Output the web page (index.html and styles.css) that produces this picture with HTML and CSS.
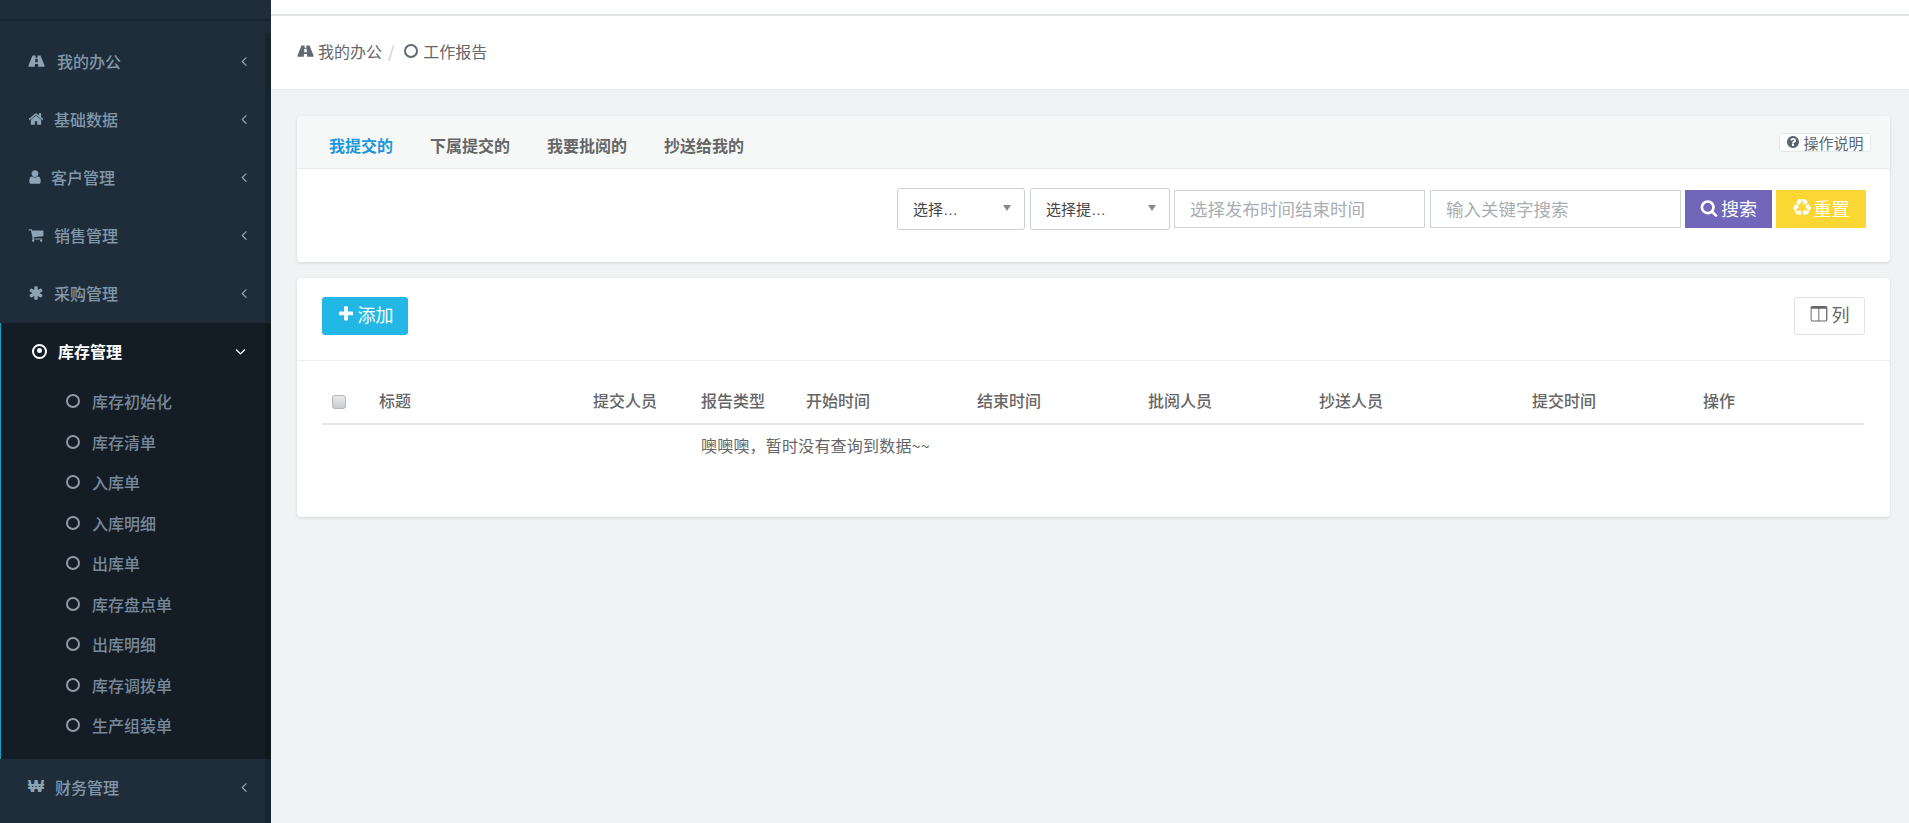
FILE: index.html
```html
<!DOCTYPE html>
<html lang="zh-CN">
  <head>
    <meta charset="utf-8" />
    <title>工作报告</title>
    <link rel="stylesheet" href="styles.css">
  </head>

  <body>
    <!-- 图标 -->
    <svg class="icon-defs" xmlns="http://www.w3.org/2000/svg">
      <symbol id="i-road" viewBox="0 0 1920 1792"><path d="M1111 1006v-4l-24-320q-1-13-11-22.500t-23-9.500h-186q-13 0-23 9.500t-11 22.500l-24 320v4q-1 12 8 20t21 8h244q12 0 21-8t8-20zm759 467q0 73-46 73h-704q13 0 22-9.500t8-22.500l-20-256q-1-13-11-22.500t-23-9.500h-272q-13 0-23 9.500t-11 22.500l-20 256q-1 13 8 22.500t22 9.500h-704q-46 0-46-73 0-54 26-116l417-1044q8-19 26-33t38-14h339q-13 0-23 9.500t-11 22.500l-15 192q-1 14 8 23t22 9h166q13 0 22-9t8-23l-15-192q-1-13-11-22.500t-23-9.500h339q20 0 38 14t26 33l417 1044q26 62 26 116z"/></symbol>
      <symbol id="i-home" viewBox="0 0 1792 1792"><path d="M1472 992v480q0 26-19 45t-45 19h-384v-384h-256v384h-384q-26 0-45-19t-19-45v-480q0-1 .5-3t.5-3l575-474 575 474q1 2 1 6zm223-69l-62 74q-8 9-21 11h-3q-13 0-21-7l-692-577-692 577q-12 8-24 7-13-2-21-11l-62-74q-8-10-7-23.500t11-21.500l719-599q32-26 76-26t76 26l244 204v-195q0-14 9-23t23-9h192q14 0 23 9t9 23v408l219 182q10 8 11 21.500t-7 23.500z"/></symbol>
      <symbol id="i-user" viewBox="0 0 1792 1792"><path d="M1536 1399q0 109-62.500 187t-150.500 78h-854q-88 0-150.500-78t-62.500-187q0-85 8.500-160.500t31.500-152 58.500-131 94-89 134.500-34.500q131 128 313 128t313-128q76 0 134.500 34.500t94 89 58.500 131 31.500 152 8.500 160.500zm-256-887q0 159-112.500 271.500t-271.500 112.500-271.500-112.500-112.500-271.500 112.500-271.500 271.500-112.500 271.500 112.500 112.500 271.500z"/></symbol>
      <symbol id="i-cart" viewBox="0 0 1792 1792"><path d="M704 1536q0 52-38 90t-90 38-90-38-38-90 38-90 90-38 90 38 38 90zm896 0q0 52-38 90t-90 38-90-38-38-90 38-90 90-38 90 38 38 90zm128-1088v512q0 24-16.500 42.500t-40.500 21.500l-1044 122q13 60 13 70 0 16-24 64h920q26 0 45 19t19 45-19 45-45 19h-1024q-26 0-45-19t-19-45q0-11 8-31.500t16-36 21.500-40 15.500-29.500l-177-823h-204q-26 0-45-19t-19-45 19-45 45-19h256q16 0 28.500 6.500t19.500 15.500 13 24.500 8 26 5.500 29.500 4.500 26h1201q26 0 45 19t19 45z"/></symbol>
      <symbol id="i-asterisk" viewBox="0 0 1792 1792"><path d="M1546 1050q46 26 59.500 77.500t-12.500 97.500l-64 110q-26 46-77.500 59.500t-97.500-12.500l-266-153v307q0 52-38 90t-90 38h-128q-52 0-90-38t-38-90v-307l-266 153q-46 26-97.500 12.500t-77.500-59.500l-64-110q-26-46-12.500-97.500t59.500-77.500l266-154-266-154q-46-26-59.500-77.500t12.500-97.500l64-110q26-46 77.500-59.500t97.500 12.500l266 153v-307q0-52 38-90t90-38h128q52 0 90 38t38 90v307l266-153q46-26 97.500-12.500t77.500 59.500l64 110q26 46 12.500 97.500t-59.500 77.500l-266 154z"/></symbol>
      <symbol id="i-left" viewBox="0 0 1792 1792"><path d="M1203 544q0 13-10 23l-393 393 393 393q10 10 10 23t-10 23l-50 50q-10 10-23 10t-23-10l-466-466q-10-10-10-23t10-23l466-466q10-10 23-10t23 10l50 50q10 10 10 23z"/></symbol>
      <symbol id="i-down" viewBox="0 0 1792 1792"><path d="M1395 736q0 13-10 23l-466 466q-10 10-23 10t-23-10l-466-466q-10-10-10-23t10-23l50-50q10-10 23-10t23 10l393 393 393-393q10-10 23-10t23 10l50 50q10 10 10 23z"/></symbol>
      <symbol id="i-help" viewBox="0 0 1792 1792"><path d="M1024 1376v-192q0-14-9-23t-23-9h-192q-14 0-23 9t-9 23v192q0 14 9 23t23 9h192q14 0 23-9t9-23zm256-672q0-88-55.500-163t-138.500-116-170-41q-243 0-371 213-15 24 8 42l132 100q7 6 19 6 16 0 25-12 53-68 86-92 34-24 86-24 48 0 85.500 26t37.500 59q0 38-20 61t-68 45q-63 28-115.500 86.500t-52.500 125.500v36q0 14 9 23t23 9h192q14 0 23-9t9-23q0-19 21.500-49.500t54.500-49.500q32-18 49-28.500t46-35 44.500-48 28-60.500 12.500-81zm384 192q0 209-103 385.500t-279.500 279.500-385.500 103-385.500-103-279.500-279.500-103-385.500 103-385.500 279.500-279.500 385.500-103 385.500 103 279.500 279.500 103 385.500z"/></symbol>
      <symbol id="i-search" viewBox="0 0 1792 1792"><path d="M1216 832q0-185-131.500-316.500t-316.500-131.500-316.500 131.500-131.500 316.500 131.500 316.500 316.500 131.500 316.500-131.500 131.500-316.500zm512 832q0 52-38 90t-90 38q-54 0-90-38l-343-342q-179 124-399 124-143 0-273.500-55.500t-225-150-150-225-55.500-273.500 55.500-273.500 150-225 225-150 273.500-55.500 273.500 55.500 225 150 150 225 55.500 273.500q0 220-124 399l343 343q37 37 37 90z"/></symbol>
      <symbol id="i-recycle" viewBox="0 0 1792 1792"><path d="M836 1169l-15 368-2 22-420-29q-36-3-67-31.500t-47-65.500q-11-27-14.500-55t4-65 12-55 21.500-64 19-53q78 12 509 28zm-387-586l180 379-147-92q-63 72-111.500 144.500t-72.500 125-39.500 94.500-18.500 63l-4 21-190-357q-17-26-18-56t6-47l8-18q35-63 114-188l-140-86zm1231 517l-188 359q-12 29-36.500 46.500t-43.500 20.500l-18 4q-71 7-219 12l8 164-230-367 211-362 7 173q170 16 283 5t170-33zm-785-924q-47 63-265 435l-317-187-19-12 225-356q20-31 60-45t80-10q24 2 48.500 12t42 21 41.500 33 36 34.500 36 39.500 32 35zm655 307l212 363q18 37 12.500 76t-27.500 74q-13 20-33 37t-38 28-48.500 22-47 16-51.500 14-46 12q-34-72-265-436l313-195zm-143-226l142-83-220 373-419-20 151-86q-34-89-75-166t-75.500-123.500-64.500-80-47-46.500l-17-13 405 1q31-3 58 10.500t39 28.500l11 15q39 61 112 190z"/></symbol>
      <symbol id="i-plus" viewBox="0 0 1792 1792"><path d="M1600 736v192q0 40-28 68t-68 28h-416v416q0 40-28 68t-68 28h-192q-40 0-68-28t-28-68v-416h-416q-40 0-68-28t-28-68v-192q0-40 28-68t68-28h416v-416q0-40 28-68t68-28h192q40 0 68 28t28 68v416h416q40 0 68 28t28 68z"/></symbol>
      <symbol id="i-columns" viewBox="0 0 1792 1792"><path d="M224 1536h608v-1152h-672v1088q0 26 19 45t45 19zm1376-64v-1088h-672v1152h608q26 0 45-19t19-45zm128-1216v1216q0 66-47 113t-113 47h-1344q-66 0-113-47t-47-113v-1216q0-66 47-113t113-47h1344q66 0 113 47t47 113z"/></symbol>
    </svg>

    <!-- 左侧菜单 -->
    <aside class="sidebar">
      <div class="sidebar-top"></div>
      <nav class="menu">
        <a class="menu-item">
          <svg class="menu-icon icon-road"><use href="#i-road"/></svg>
          <span class="menu-label">我的办公</span>
          <svg class="menu-arrow"><use href="#i-left"/></svg>
        </a>
        <a class="menu-item">
          <svg class="menu-icon"><use href="#i-home"/></svg>
          <span class="menu-label">基础数据</span>
          <svg class="menu-arrow"><use href="#i-left"/></svg>
        </a>
        <a class="menu-item">
          <svg class="menu-icon icon-user"><use href="#i-user"/></svg>
          <span class="menu-label">客户管理</span>
          <svg class="menu-arrow"><use href="#i-left"/></svg>
        </a>
        <a class="menu-item">
          <svg class="menu-icon"><use href="#i-cart"/></svg>
          <span class="menu-label">销售管理</span>
          <svg class="menu-arrow"><use href="#i-left"/></svg>
        </a>
        <a class="menu-item">
          <svg class="menu-icon"><use href="#i-asterisk"/></svg>
          <span class="menu-label">采购管理</span>
          <svg class="menu-arrow"><use href="#i-left"/></svg>
        </a>

        <!-- 当前展开的分组 -->
        <div class="menu-group">
          <a class="menu-item menu-item-open">
            <span class="dot-ring"></span>
            <span class="menu-label">库存管理</span>
            <svg class="menu-arrow arrow-down"><use href="#i-down"/></svg>
          </a>
          <ul class="submenu">
            <li><span class="ring"></span>库存初始化</li>
            <li><span class="ring"></span>库存清单</li>
            <li><span class="ring"></span>入库单</li>
            <li><span class="ring"></span>入库明细</li>
            <li><span class="ring"></span>出库单</li>
            <li><span class="ring"></span>库存盘点单</li>
            <li><span class="ring"></span>出库明细</li>
            <li><span class="ring"></span>库存调拨单</li>
            <li><span class="ring"></span>生产组装单</li>
          </ul>
        </div>

        <a class="menu-item">
          <span class="menu-glyph">₩</span>
          <span class="menu-label">财务管理</span>
          <svg class="menu-arrow"><use href="#i-left"/></svg>
        </a>
      </nav>
      <div class="sidebar-track"></div>
    </aside>

    <main class="main">
      <div class="topbar"></div>

      <!-- 面包屑 -->
      <div class="crumbs">
        <svg class="crumb-road"><use href="#i-road"/></svg>
        <span>我的办公</span>
        <span class="crumb-sep">/</span>
        <span class="crumb-ring"></span>
        <span>工作报告</span>
      </div>

      <div class="content">
        <!-- 筛选 -->
        <section class="card">
          <div class="card-head">
            <div class="tabs">
              <a class="tab tab-active">我提交的</a>
              <a class="tab">下属提交的</a>
              <a class="tab">我要批阅的</a>
              <a class="tab">抄送给我的</a>
            </div>
            <button class="btn-help">
              <svg><use href="#i-help"/></svg>操作说明
            </button>
          </div>
          <div class="filters">
            <div class="select select-type"><span>选择…</span><i class="caret"></i></div>
            <div class="select select-user"><span>选择提…</span><i class="caret"></i></div>
            <input class="field field-time" placeholder="选择发布时间结束时间" />
            <input class="field" placeholder="输入关键字搜索" />
            <button class="btn btn-search"><svg><use href="#i-search"/></svg>搜索</button>
            <button class="btn btn-reset"><svg><use href="#i-recycle"/></svg>重置</button>
          </div>
        </section>

        <!-- 列表 -->
        <section class="card card-list">
          <div class="toolbar">
            <button class="btn btn-add"><svg><use href="#i-plus"/></svg>添加</button>
            <button class="btn-columns"><svg><use href="#i-columns"/></svg>列</button>
          </div>
          <div class="table-wrap">
            <table class="report-table">
              <colgroup>
                <col class="c-check" /><col class="c-title" /><col class="c-user" />
                <col class="c-type" /><col class="c-time2" /><col class="c-time2" />
                <col class="c-time2" /><col class="c-cc" /><col class="c-time2" /><col />
              </colgroup>
              <thead>
                <tr>
                  <th><input type="checkbox" class="check" /></th>
                  <th>标题</th>
                  <th>提交人员</th>
                  <th>报告类型</th>
                  <th>开始时间</th>
                  <th>结束时间</th>
                  <th>批阅人员</th>
                  <th>抄送人员</th>
                  <th>提交时间</th>
                  <th>操作</th>
                </tr>
              </thead>
              <tbody>
                <tr>
                  <td colspan="3"></td>
                  <td colspan="7">噢噢噢，暂时没有查询到数据~~</td>
                </tr>
              </tbody>
            </table>
          </div>
        </section>
      </div>
    </main>
  </body>
</html>
```

FILE: styles.css
```css
* {
  box-sizing: border-box;
}

body {
  margin: 0;
  height: 100vh;
  display: flex;
  overflow: hidden;
  background: #f0f3f4;
  color: #666;
  font-family: "Noto Sans CJK SC", "Liberation Sans", sans-serif;
  font-size: 16px;
}

button,
input {
  font-family: inherit;
}

.icon-defs {
  display: none;
}

svg {
  fill: currentColor;
  flex: none;
}

/* 左侧菜单 */
.sidebar {
  position: relative;
  width: 271px;
  flex: none;
  background: #1f2d3a;
  color: #8197aa;
}

.sidebar-top {
  height: 21px;
  border-bottom: 2px solid #17222c;
}

.menu {
  padding-top: 12px;
}

.menu-item {
  display: flex;
  align-items: center;
  height: 58px;
  padding: 0 19px 2px 28px;
  font-weight: 500;
}

.menu-icon {
  width: 16px;
  height: 16px;
  margin-right: 10px;
  color: #8ea3b6;
}

.icon-road {
  width: 17px;
  margin-right: 12px;
}

.icon-user {
  margin-right: 8px;
  margin-left: -1px;
  width: 16px;
}

.menu-glyph {
  width: 18px;
  margin-right: 9px;
  font-weight: 700;
  font-family: "Liberation Sans", sans-serif;
  font-size: 17px;
  color: #8ea3b6;
}

.menu-label {
  flex: 1;
}

.menu-arrow {
  width: 16px;
  height: 16px;
  color: #8ea3b6;
}

.menu-group {
  background: #141d25;
  border-left: 1px solid #12a0bd;
  padding-bottom: 13px;
}

.menu-item-open {
  color: #fff;
  padding-left: 31px;
  padding-right: 22px;
  font-weight: 700;
}

.arrow-down {
  width: 17px;
  height: 17px;
  color: #fff;
}

.dot-ring {
  position: relative;
  width: 15px;
  height: 15px;
  margin-right: 11px;
  border: 2.5px solid #fff;
  border-radius: 50%;
}

.dot-ring::after {
  content: "";
  position: absolute;
  top: 2.5px;
  left: 2.5px;
  width: 5px;
  height: 5px;
  background: #fff;
  border-radius: 50%;
}

.submenu {
  list-style: none;
  margin: 0;
  padding: 0 0 0 65px;
  color: #76889a;
  font-weight: 500;
}

.submenu li {
  display: flex;
  align-items: center;
  height: 40.5px;
}

.ring {
  width: 14px;
  height: 14px;
  margin-right: 12px;
  border: 2.5px solid #8d9aa7;
  border-radius: 50%;
}

/* 滚动条轨道，盖在菜单上 */
.sidebar-track {
  position: absolute;
  top: 33px;
  right: 0;
  bottom: 0;
  width: 6px;
  background: rgba(0, 0, 0, 0.2);
}

.main {
  flex: 1;
  min-width: 0;
}

.topbar {
  height: 16px;
  background: #fff;
  border-bottom: 2px solid #dfe3e5;
}

.crumbs {
  display: flex;
  align-items: center;
  height: 74px;
  padding: 0 0 3px 26px;
  background: #fff;
  border-bottom: 1px solid #e8edef;
}

.crumb-road {
  width: 17px;
  height: 16px;
  margin-right: 4px;
  color: #5f6a72;
}

.crumb-sep {
  margin: 0 10px 0 6px;
  color: #c3c9cd;
}

.crumb-ring {
  width: 14px;
  height: 14px;
  margin-right: 5px;
  border: 2.5px solid #5f6a72;
  border-radius: 50%;
}

.content {
  padding: 26px 19px 0 26px;
}

.card {
  background: #fff;
  border-radius: 4px;
  box-shadow: 0 1px 3px rgba(0, 0, 0, 0.12);
}

.card-list {
  margin-top: 16px;
  height: 239px;
}

.card-head {
  display: flex;
  align-items: center;
  justify-content: space-between;
  height: 53px;
  padding: 0 19px 0 32px;
  background: #f6f8f8;
  border-bottom: 1px solid #e6eaec;
  border-radius: 4px 4px 0 0;
}

.tabs {
  display: flex;
  gap: 37px;
  padding-top: 5px;
}

.tab {
  font-weight: 700;
  color: #666;
}

.tab-active {
  color: #1c97de;
}

.btn-help {
  display: flex;
  align-items: center;
  justify-content: center;
  gap: 3px;
  width: 92px;
  height: 19px;
  padding: 0;
  background: #fff;
  border: 1px solid #e2e7e9;
  border-radius: 3px;
  color: #58666e;
  font-size: 15px;
}

.btn-help svg {
  width: 14px;
  height: 14px;
}

.filters {
  display: flex;
  align-items: center;
  justify-content: flex-end;
  gap: 4px;
  height: 93px;
  padding: 0 24px 13px 0;
}

.select {
  display: flex;
  align-items: center;
  justify-content: space-between;
  height: 42px;
  padding: 0 13px 2px 15px;
  background: #fff;
  border: 1px solid #ccd0d3;
  border-radius: 3px;
  color: #444;
  font-family: "Liberation Sans", "Noto Sans CJK SC", sans-serif;
  font-size: 15px;
}

.select-type {
  width: 128px;
  margin-right: 1px;
}

.select-user {
  width: 140px;
}

.caret {
  width: 0;
  height: 0;
  border-left: 4px solid transparent;
  border-right: 4px solid transparent;
  border-top: 6px solid #888;
}

.field {
  width: 251px;
  height: 38px;
  padding: 0 15px 2px;
  background: #fff;
  border: 1px solid #cfd3d6;
  font-size: 17.5px;
  color: #58666e;
  outline: none;
}

.field-time {
  margin-right: 1px;
}

.field::placeholder {
  color: #a8aeb3;
}

.btn {
  display: flex;
  align-items: center;
  justify-content: center;
  gap: 3px;
  height: 38px;
  padding: 0 0 3px;
  border: 0;
  color: #fff;
  font-size: 18px;
}

.btn svg {
  width: 18px;
  height: 18px;
}

.btn-search {
  width: 87px;
  background: #7266ba;
}

.btn-reset {
  width: 90px;
  background: #fad733;
}

.toolbar {
  display: flex;
  align-items: center;
  justify-content: space-between;
  height: 83px;
  padding: 0 25px 7px 25px;
  border-bottom: 1px solid #eaeef0;
}

.btn-add {
  width: 86px;
  background: #23b7e5;
  border-radius: 3px;
}

.btn-columns {
  display: flex;
  align-items: center;
  justify-content: center;
  gap: 4px;
  width: 71px;
  height: 38px;
  padding: 0 0 3px;
  background: #fff;
  border: 1px solid #e0e4e6;
  border-radius: 3px;
  color: #666;
  font-size: 18px;
}

.btn-columns svg {
  width: 18px;
  height: 18px;
}

.table-wrap {
  padding: 19px 26px 0 25px;
}

.report-table {
  width: 100%;
  table-layout: fixed;
  border-collapse: collapse;
}

.c-check {
  width: 49px;
}

.c-title {
  width: 214px;
}

.c-user {
  width: 108px;
}

.c-type {
  width: 105px;
}

.c-time2 {
  width: 171px;
}

.c-cc {
  width: 213px;
}

.report-table th {
  height: 44px;
  padding: 0 8px 3px;
  text-align: left;
  font-weight: 500;
  border-bottom: 2px solid #e4e8ea;
}

.report-table td {
  height: 45px;
  padding: 0 8px 4px;
  font-size: 16px;
  letter-spacing: 0.2px;
}

.check {
  display: block;
  width: 14px;
  height: 14px;
  margin: 4px 0 0 2px;
  appearance: none;
  background: linear-gradient(#e9eaeb, #c9cccf);
  border: 1px solid #b4b8bb;
  border-radius: 3px;
}
```
